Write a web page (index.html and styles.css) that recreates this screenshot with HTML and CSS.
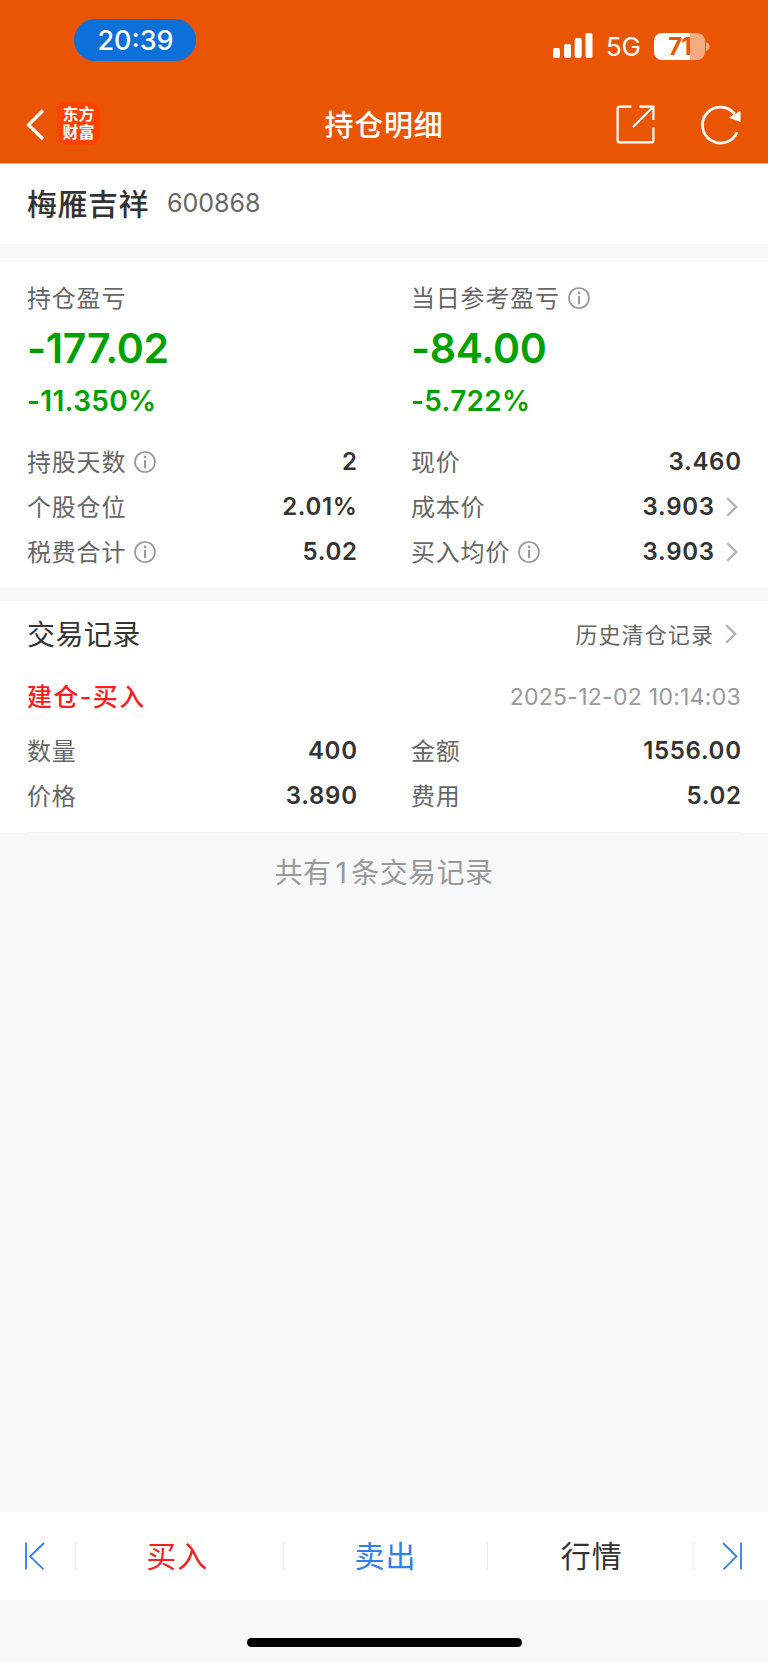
FILE: index.html
```html
<!DOCTYPE html>
<html lang="zh-CN">

<head>
    <meta charset="UTF-8">
    <meta name="viewport" content="width=device-width, initial-scale=1.0">
    <title>持仓明细</title>
    <link rel="stylesheet" href="styles.css">
</head>

<body>
    <header class="header">
        <!-- 状态栏 -->
        <div class="status-bar">
            <span class="time">20:39</span>
            <div class="status-right">
                <svg class="signal" width="40" height="26" viewBox="0 0 40 26" fill="#fff">
                    <rect x="0" y="15" width="7" height="10" rx="2" />
                    <rect x="11" y="11" width="7" height="14" rx="2" />
                    <rect x="21.7" y="5" width="7" height="20" rx="2" />
                    <rect x="32.5" y="0" width="7" height="25" rx="2" />
                </svg>
                <span class="network">5G</span>
                <div class="battery"><span>71</span></div>
                <svg class="battery-tip" width="4" height="9" viewBox="0 0 4 9">
                    <path d="M0 0C2 .6 3.700 2.300 3.700 4.500S2 8.400 0 9z" fill="#f5ab80" />
                </svg>
            </div>
        </div>
        <!-- 导航栏 -->
        <div class="nav-bar">
            <div class="nav-left">
                <svg width="20" height="32" viewBox="0 0 20 32" fill="none" stroke="#fff" stroke-width="3.200">
                    <path d="M18 1.500L3.500 16 18 30" />
                </svg>
                <div class="logo">东方<br>财富</div>
            </div>
            <h1>持仓明细</h1>
            <div class="nav-right">
                <svg width="39" height="39" viewBox="0 0 39 39" fill="none" stroke="#fff" stroke-width="2.200">
                    <path d="M15.500 1.600H3.600a2 2 0 0 0-2 2v31.800a2 2 0 0 0 2 2h31.800a2 2 0 0 0 2-2V22.500" />
                    <path d="M23.500 1.600h13.900V15M37 2L17 22" />
                </svg>
                <svg width="41" height="40" viewBox="0 0 41 40" fill="none">
                    <path d="M34.600 8.900A18 18 0 1 0 37 27.200" stroke="#fff" stroke-width="2.800" />
                    <path d="M40.500 5.800v11.200L28.800 12.800z" fill="#fff" />
                </svg>
            </div>
        </div>
    </header>

    <div class="stock">
        <span class="stock-name">梅雁吉祥</span>
        <span class="stock-code">600868</span>
    </div>

    <!-- 盈亏信息 -->
    <section class="card profit">
        <div class="col">
            <div class="label">持仓盈亏</div>
            <div class="amount">-177.02</div>
            <div class="percent">-11.350%</div>
            <div class="row">
                <span class="label">持股天数<svg class="info" viewBox="0 0 22 22"><use href="#info" /></svg></span>
                <span class="value">2</span>
            </div>
            <div class="row">
                <span class="label">个股仓位</span>
                <span class="value">2.01%</span>
            </div>
            <div class="row">
                <span class="label">税费合计<svg class="info" viewBox="0 0 22 22"><use href="#info" /></svg></span>
                <span class="value">5.02</span>
            </div>
        </div>
        <div class="col">
            <div class="label">当日参考盈亏<svg class="info" viewBox="0 0 22 22"><use href="#info" /></svg></div>
            <div class="amount">-84.00</div>
            <div class="percent">-5.722%</div>
            <div class="row">
                <span class="label">现价</span>
                <span class="value">3.460</span>
            </div>
            <div class="row">
                <span class="label">成本价</span>
                <span class="value">3.903<svg class="arrow" viewBox="0 0 12 20"><use href="#arrow" /></svg></span>
            </div>
            <div class="row">
                <span class="label">买入均价<svg class="info" viewBox="0 0 22 22"><use href="#info" /></svg></span>
                <span class="value">3.903<svg class="arrow" viewBox="0 0 12 20"><use href="#arrow" /></svg></span>
            </div>
        </div>
    </section>

    <!-- 交易记录 -->
    <section class="records">
        <div class="records-head">
            <h2>交易记录</h2>
            <span class="history">历史清仓记录<svg class="arrow" viewBox="0 0 12 20"><use href="#arrow" /></svg></span>
        </div>
        <div class="record-title">
            <span class="record-type">建仓-买入</span>
            <span class="record-time">2025-12-02 10:14:03</span>
        </div>
        <div class="card">
            <div class="col">
                <div class="row"><span class="label">数量</span><span class="value">400</span></div>
                <div class="row"><span class="label">价格</span><span class="value">3.890</span></div>
            </div>
            <div class="col">
                <div class="row"><span class="label">金额</span><span class="value">1556.00</span></div>
                <div class="row"><span class="label">费用</span><span class="value">5.02</span></div>
            </div>
        </div>
        <div class="record-line"></div>
    </section>
    <p class="total">共有<span class="count">1</span>条交易记录</p>

    <!-- 底部操作 -->
    <footer class="tab-bar">
        <div class="tab side">
            <svg width="22" height="28" viewBox="0 0 22 28" fill="none" stroke="#2f80ea" stroke-width="1.800">
                <path d="M2 .5v27M20 1L6.200 14.300 19.500 27.300" />
            </svg>
        </div>
        <div class="tab buy">买入</div>
        <div class="tab sell">卖出</div>
        <div class="tab quote">行情</div>
        <div class="tab side">
            <svg width="22" height="28" viewBox="0 0 22 28" fill="none" stroke="#2f80ea" stroke-width="1.800">
                <path d="M20 .5v27M2 1l13.500 13.300L2.500 27.300" />
            </svg>
        </div>
    </footer>
    <div class="home-area">
        <div class="home-indicator"></div>
    </div>

    <svg class="symbols">
        <symbol id="info" viewBox="0 0 22 22">
            <circle cx="11" cy="11" r="10" fill="none" stroke="#949494" stroke-width="1.600" />
            <path d="M11 9v8.300" stroke="#949494" stroke-width="1.900" />
            <circle cx="11" cy="5.900" r="1.300" fill="#949494" />
        </symbol>
        <symbol id="arrow" viewBox="0 0 12 20">
            <path d="M1.200 1.200L10.200 10 1.200 18.800" fill="none" stroke="#b3b3b3" stroke-width="2.400" />
        </symbol>
    </svg>
</body>

</html>
```
FILE: styles.css
```css
* {
    box-sizing: border-box;
}

body {
    margin: 0;
    min-height: 1662px;
    display: flex;
    flex-direction: column;
    background-color: #f6f8fa;
    color: #333;
    font-family: Inter, "Noto Sans CJK SC", sans-serif;
}

h1,
h2,
p {
    margin: 0;
}

.header {
    height: 164px;
    background-color: #ea5504;
    border-bottom: 1px solid #f6b793;
    color: #fff;
}

.status-bar {
    height: 86px;
    padding: 19px 58px 0 74px;
    display: flex;
    justify-content: space-between;
    align-items: flex-start;
}

.time {
    width: 122px;
    height: 42px;
    padding-left: 1px;
    line-height: 43px;
    border-radius: 21px;
    background-color: #0d70d8;
    text-align: center;
    font-size: 27px;
    font-weight: 500;
}

.status-right {
    display: flex;
    align-items: center;
    height: 54px;
}

.network {
    width: 36px;
    margin-left: 13px;
    font-size: 26px;
    letter-spacing: -0.2px;
}

.battery {
    width: 51px;
    height: 27px;
    line-height: 27px;
    margin-left: 12px;
    border-radius: 8px;
    background: linear-gradient(to right, #fff 36px, #f5ab80 36px);
    color: #ea5504;
    text-align: center;
    font-size: 24px;
    font-weight: 700;
    letter-spacing: -1px;
}

.battery-tip {
    margin-left: 1px;
}

.nav-bar {
    height: 77px;
    padding: 0 27px 0 25px;
    display: flex;
    align-items: center;
    justify-content: space-between;
}

.nav-left,
.nav-right {
    width: 150px;
    display: flex;
    align-items: center;
}

.nav-right {
    justify-content: flex-end;
    gap: 45px;
}

.logo {
    width: 43px;
    height: 43px;
    margin-left: 12px;
    padding-top: 3px;
    margin-bottom: 2px;
    border-radius: 9px;
    background-color: #ff4200;
    text-align: center;
    font-size: 16px;
    line-height: 18px;
    font-weight: 700;
}

h1 {
    padding: 0 0 4px 2px;
    font-size: 29px;
    font-weight: 500;
    letter-spacing: 0.8px;
}

.stock {
    height: 80px;
    padding: 0 27px 3px;
    margin-bottom: 18px;
    display: flex;
    align-items: center;
    gap: 18px;
    background-color: #fff;
}

.stock-name {
    padding-bottom: 2px;
    font-size: 30px;
    font-weight: 500;
    letter-spacing: 0.5px;
}

.stock-code {
    font-size: 25px;
    color: #666;
}

.card {
    display: grid;
    grid-template-columns: 1fr 1fr;
    column-gap: 54px;
    padding: 0 27px;
    background-color: #fff;
}

.profit {
    padding-top: 18px;
    padding-bottom: 13px;
    margin-bottom: 14px;
}

.label {
    display: flex;
    align-items: center;
    height: 36px;
    padding-bottom: 3px;
    font-size: 24px;
    letter-spacing: 0.8px;
    color: #666;
}

.info {
    width: 22px;
    height: 22px;
    margin: 3px 0 0 8px;
}

.amount {
    height: 64px;
    line-height: 64px;
    font-size: 41px;
    font-weight: 600;
    letter-spacing: -0.3px;
    color: #00a000;
}

.percent {
    height: 42px;
    line-height: 42px;
    margin-bottom: 17px;
    font-size: 28px;
    font-weight: 600;
    letter-spacing: 0.3px;
    color: #00a000;
}

.row {
    display: flex;
    align-items: center;
    justify-content: space-between;
    height: 45px;
}

.value {
    display: flex;
    align-items: center;
    margin-right: -0.7px;
    font-size: 24px;
    font-weight: 600;
    letter-spacing: 0.7px;
}

.arrow {
    width: 12px;
    height: 20px;
    margin: 0 4px 0 11px;
}

.records {
    background-color: #fff;
}

.records-head,
.record-title {
    display: flex;
    align-items: center;
    justify-content: space-between;
    height: 66px;
    padding: 0 27px;
}

.record-title {
    height: 60px;
    margin-bottom: 1px;
}

.record-line {
    height: 1px;
    margin: 14px 27px 0;
    background-color: #f3f4f6;
}

h2 {
    padding-bottom: 3px;
    font-size: 28px;
    font-weight: 400;
    letter-spacing: 0.4px;
}

.history {
    display: flex;
    align-items: center;
    padding-bottom: 3px;
    font-size: 22px;
    letter-spacing: 1.1px;
    color: #666;
}

.history .arrow {
    margin-top: 3px;
}

.record-type {
    padding-bottom: 4px;
    font-size: 25px;
    font-weight: 500;
    letter-spacing: 1.4px;
    color: #fa1e1e;
}

.record-time {
    font-size: 23px;
    letter-spacing: 0.27px;
    color: #999;
}

.total {
    margin-top: 20px;
    line-height: 40px;
    text-align: center;
    font-size: 28px;
    letter-spacing: 0.4px;
    color: #999;
}

.count {
    margin: 0 4px;
}

.tab-bar {
    display: flex;
    align-items: center;
    height: 88px;
    margin-top: auto;
    background-color: #fff;
}

.tab {
    flex: 1;
    height: 30px;
    padding-bottom: 4px;
    display: flex;
    align-items: center;
    justify-content: center;
    border-left: 1px solid #ececec;
    font-size: 30px;
    letter-spacing: 1px;
}

.tab.side {
    flex: none;
    width: 75px;
    padding: 0 0 0 2px;
}

.tab.side:first-child {
    border-left: none;
    padding: 0 5px 0 0;
}

.buy {
    padding-right: 5px;
    color: #fa1e1e;
}

.sell {
    color: #2f80ea;
}

.quote {
    padding-left: 3px;
}

.home-area {
    height: 62px;
    padding-top: 38px;
}

.home-indicator {
    width: 275px;
    height: 9px;
    margin: 0 auto;
    border-radius: 5px;
    background-color: #000;
}

.symbols {
    position: absolute;
    width: 0;
    height: 0;
}
```
